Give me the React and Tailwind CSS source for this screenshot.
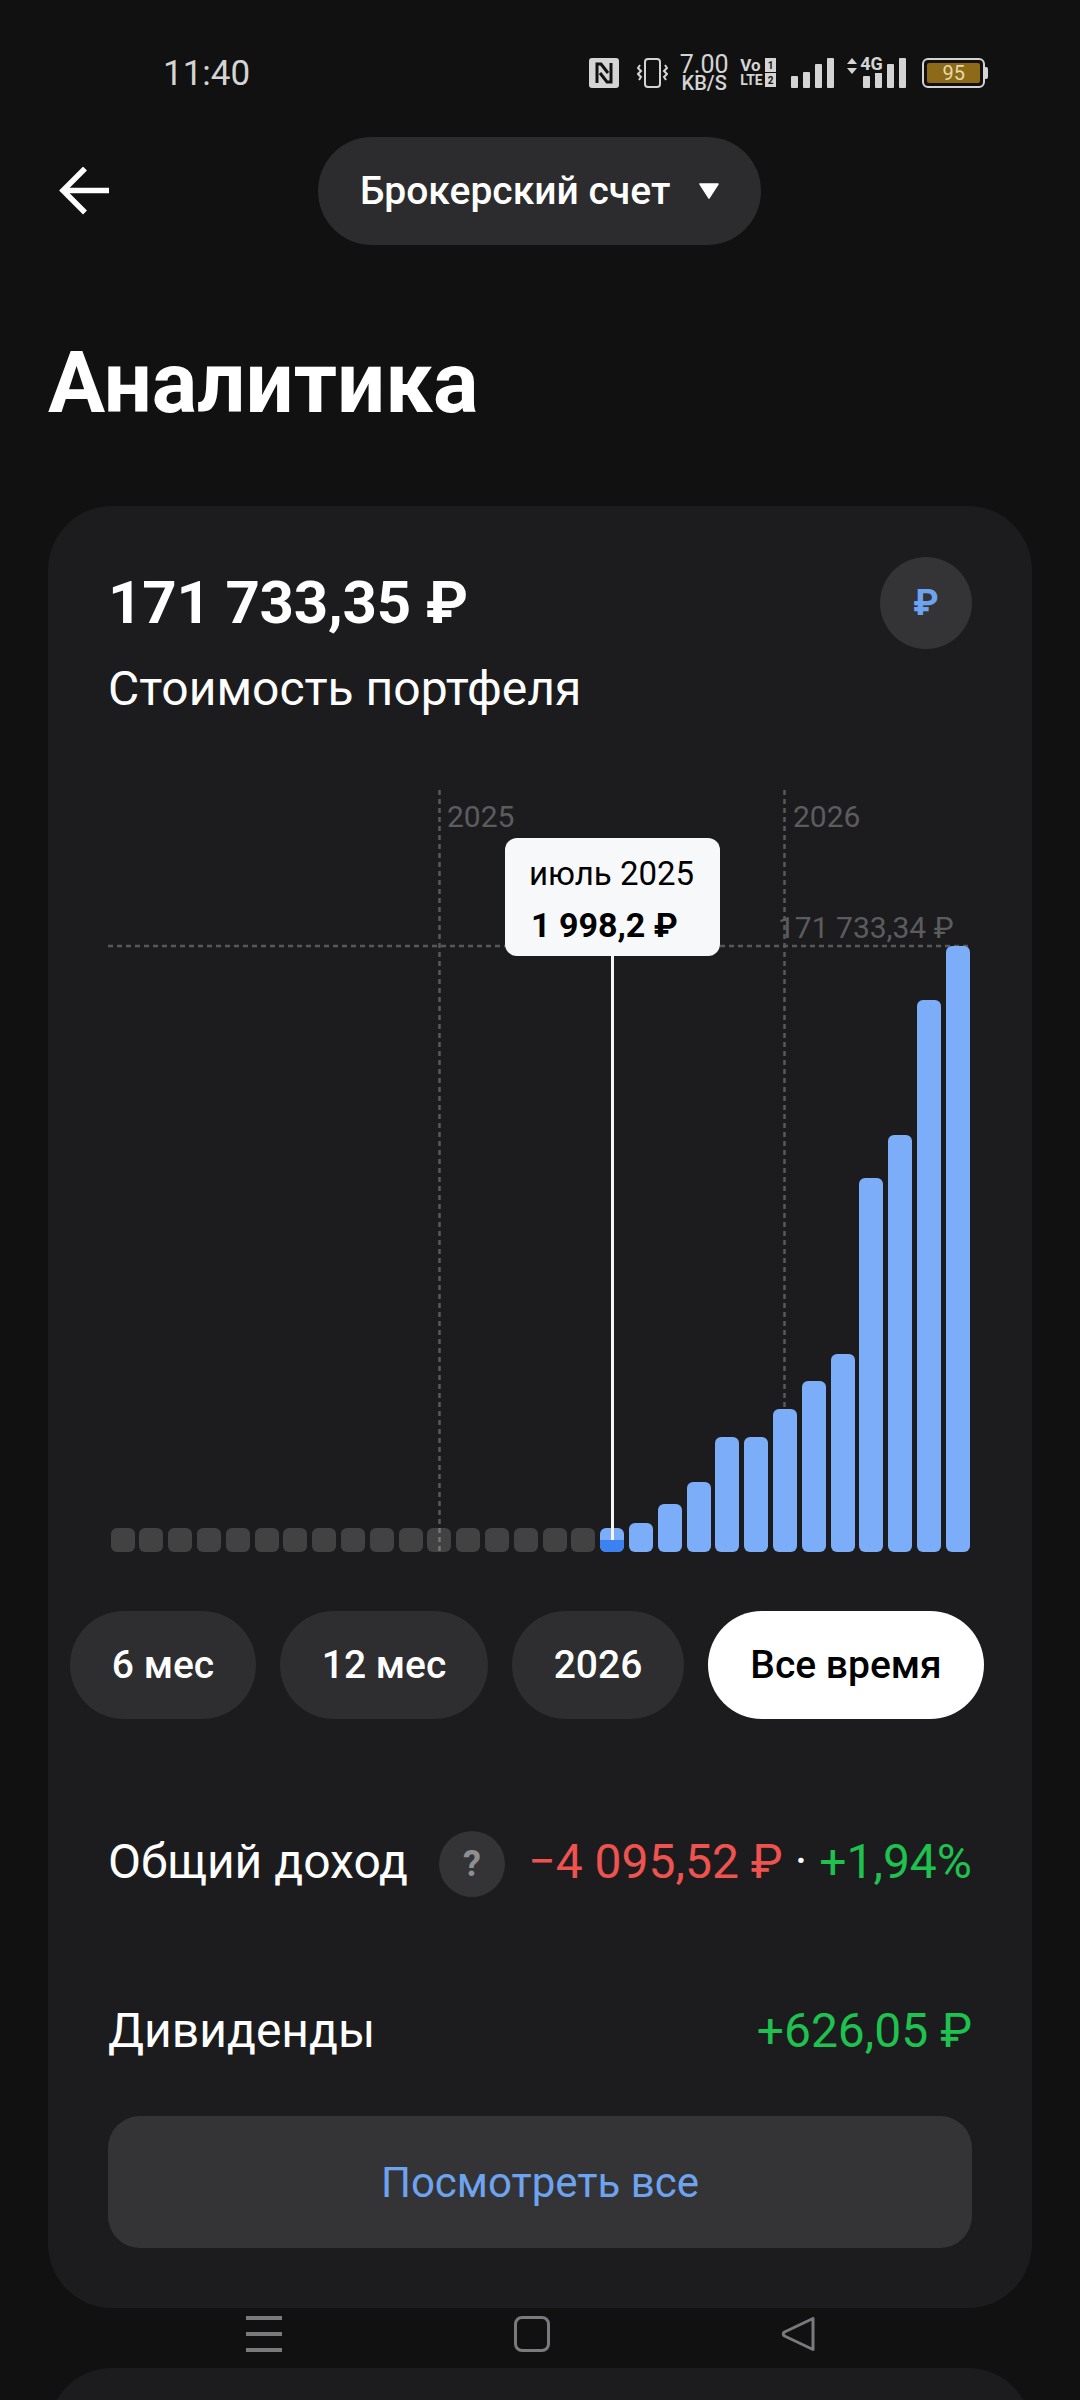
import React from "react";

// bar heights of the chart, left to right (px)
const BAR_HEIGHTS = [
  24, 24, 24, 24, 24, 24, 24, 24, 24, 24, 24, 24, 24, 24, 24, 24, 24, 24,
  29, 48, 70, 115, 115, 143, 171, 198, 374, 417, 552, 606,
];

const PERIODS = [
  { label: "6 мес", width: "w-[186px]" },
  { label: "12 мес", width: "w-[208px]" },
  { label: "2026", width: "w-[172px]" },
  { label: "Все время", width: "w-[276px]", active: true },
];

function SignalBars({ heights }) {
  return (
    <div className="flex items-end gap-[5px]">
      {heights.map((h, i) => (
        <div
          key={i}
          className="w-[7px] rounded-[1px] bg-[#d4d4d4]"
          style={{ height: h }}
        />
      ))}
    </div>
  );
}

function StatusBar() {
  return (
    <div className="flex h-[114px] items-start pt-[54px] text-[#d4d4d4]">
      <span className="ml-[163px] text-[35px] leading-[40px]">11:40</span>
      <div className="ml-[339px] mt-[3px] flex h-[32px] items-center">
        {/* nfc */}
        <svg width="30" height="30" viewBox="0 0 30 30">
          <rect width="30" height="30" rx="3" fill="#d4d4d4" />
          <path d="M8 25V6h4l7 9M22 5v19h-4l-7-9" fill="none" stroke="#111112" strokeWidth="3" />
        </svg>
        {/* vibrate */}
        <svg className="ml-[18px]" width="31" height="30" viewBox="0 0 31 30" fill="none" stroke="#d4d4d4" strokeWidth="2">
          <rect x="8" y="1" width="15" height="28" rx="3" />
          <path d="M3 7l-2 3 3 3-3 3 3 3-2 3M28 7l2 3-3 3 3 3-3 3 2 3" />
        </svg>
        <div className="ml-[12px] flex w-[48px] flex-col items-center">
          <span className="text-[25px] leading-[20px]">7.00</span>
          <span className="text-[20px] leading-[17px] font-medium">KB/S</span>
        </div>
        <div className="ml-[12px] flex w-[36px] flex-col text-[14px] leading-[15px] font-bold">
          <div className="flex justify-between">
            <span className="text-[17px]">Vo</span>
            <span className="flex h-[14px] w-[11px] items-center justify-center bg-[#d4d4d4] text-[10px] text-[#111112]">1</span>
          </div>
          <div className="flex justify-between">
            <span>LTE</span>
            <span className="flex h-[14px] w-[11px] items-center justify-center bg-[#d4d4d4] text-[10px] text-[#111112]">2</span>
          </div>
        </div>
        <div className="ml-[15px]">
          <SignalBars heights={[12, 16, 24, 30]} />
        </div>
        <div className="relative ml-[12px] h-[30px] w-[60px]">
          <div className="absolute right-0 bottom-0">
            <SignalBars heights={[12, 18, 24, 30]} />
          </div>
          <span className="absolute top-[-3px] left-[14px] bg-[#111112] pr-[1px] text-[18px] leading-[18px] font-bold">4G</span>
          <svg className="absolute top-0 left-0" width="12" height="16" viewBox="0 0 12 16" fill="#d4d4d4">
            <path d="M6 0l5 6H1zM6 16l-5-6h10z" />
          </svg>
        </div>
        {/* battery */}
        <div className="ml-[16px] flex items-center">
          <div className="flex h-[30px] w-[63px] items-center rounded-[6px] border-2 border-[#d4d4d4] p-[3px]">
            <div className="flex h-full w-full items-center justify-center rounded-[2px] bg-[#8c6a18] text-[20px] leading-none text-[#e8d9a8]">95</div>
          </div>
          <div className="h-[12px] w-[3px] rounded-r-[2px] bg-[#d4d4d4]" />
        </div>
      </div>
    </div>
  );
}

function Header() {
  return (
    <div className="relative mt-[23px] flex h-[108px] items-center">
      <svg className="ml-[59px] mt-[-1px]" width="50" height="48" viewBox="0 0 50 48" fill="none" stroke="#fff" strokeWidth="5.5">
        <path d="M50 23.5H4" />
        <path d="M26 1.5L4 23.5l22 22" />
      </svg>
      <button className="ml-[209px] flex h-[108px] w-[443px] items-center rounded-full bg-[#2c2c2e] pl-[42px] text-[39px] font-medium whitespace-nowrap text-white">
        Брокерский счет
        <svg className="ml-[28px]" width="22" height="16" viewBox="0 0 22 16" fill="#fff">
          <path d="M2 1h18l-9 14z" stroke="#fff" strokeWidth="1.5" strokeLinejoin="round" />
        </svg>
      </button>
    </div>
  );
}

function Chart() {
  return (
    <div className="relative mt-[73px] h-[762px] w-full">
      {/* grid lines */}
      <svg className="absolute inset-0" width="864" height="762" fill="none" stroke="#58585a" strokeWidth="2.5" strokeDasharray="5 4">
        <path d="M331.5 0V762M676.5 0V762M0 156H862" />
      </svg>

      {/* bars */}
      <div className="absolute right-0 bottom-0 left-0 flex items-end gap-[4.8px] pl-[2.6px]">
        {BAR_HEIGHTS.map((h, i) => (
          <div
            key={i}
            className={`w-[24px] shrink-0 overflow-hidden rounded-[6px] ${
              i < 17 ? "bg-white/[0.17]" : "bg-[#7cadf9]"
            }`}
            style={{ height: h }}
          >
            {i === 17 && <div className="mt-[12px] h-[12px] bg-[#3b82f0]" />}
          </div>
        ))}
      </div>

      <span className="absolute top-[10px] left-[339px] text-[30px] leading-[34px] text-[#5c5c5e]">2025</span>
      <span className="absolute top-[10px] left-[685px] text-[30px] leading-[34px] text-[#5c5c5e]">2026</span>
      <span className="absolute top-[121px] left-[670px] text-[30px] leading-[34px] whitespace-nowrap text-[#5c5c5e]">
        171 733,34 ₽
      </span>

      {/* selected month */}
      <div className="absolute top-[165px] bottom-[12px] left-[503px] w-[3px] bg-[#f5f5f5]" />
      <div className="absolute top-[48px] left-[397px] h-[118px] w-[215px] rounded-[12px] bg-[#f7f8fa] pt-[17px] pl-[24px] text-black">
        <div className="text-[33px] leading-[38px]">июль 2025</div>
        <div className="mt-[13px] ml-[2px] text-[34px] leading-[38px] font-bold whitespace-nowrap">1 998,2 ₽</div>
      </div>
    </div>
  );
}

function SummaryRow({ label, help, children, className }) {
  return (
    <div className={`flex h-[66px] items-center ${className}`}>
      <span className="mb-[4px] text-[48px] leading-[56px] text-white">{label}</span>
      {help && (
        <span className="ml-[31px] flex h-[66px] w-[66px] items-center justify-center rounded-full bg-[#343436] text-[36px] font-bold text-[#8e8e93]">
          ?
        </span>
      )}
      <div className="mb-[4px] ml-auto flex items-center text-[48px] leading-[56px]">{children}</div>
    </div>
  );
}

export default function App() {
  return (
    <div className="relative h-[2400px] w-[1080px] overflow-hidden bg-[#111112] font-['Roboto',sans-serif]">
      <StatusBar />
      <Header />

      <h1 className="mt-[92px] ml-[48px] text-[85px] leading-[92px] font-bold text-white">Аналитика</h1>

      <div className="mx-[48px] mt-[77px] rounded-[64px] bg-[#1c1c1e] px-[60px] pt-[51px] pb-[60px]">
        <div className="flex items-start justify-between">
          <div>
            <div className="mt-[10px] text-[60px] leading-[72px] font-bold tracking-[-0.2px] text-white">171 733,35 ₽</div>
            <div className="mt-[22px] text-[48px] leading-[56px] text-white">Стоимость портфеля</div>
          </div>
          <div className="flex h-[92px] w-[92px] items-center justify-center rounded-full bg-[#343436] text-[36px] font-bold text-[#6ea3f0]">
            ₽
          </div>
        </div>

        <Chart />

        <div className="mx-[-38px] mt-[59px] flex gap-6">
          {PERIODS.map((p) => (
            <button
              key={p.label}
              className={`h-[108px] shrink-0 rounded-full text-[39px] font-medium ${p.width} ${
                p.active ? "bg-white text-black" : "bg-[#2e2e30] text-white"
              }`}
            >
              {p.label}
            </button>
          ))}
        </div>

        <SummaryRow label="Общий доход" help className="mt-[112px]">
          <span className="text-[#ef5350]">−4 095,52 ₽</span>
          <span className="mx-[12px] text-white">·</span>
          <span className="text-[#1fc14f]">+1,94%</span>
        </SummaryRow>

        <SummaryRow label="Дивиденды" className="mt-[103px]">
          <span className="text-[#1fc14f]">+626,05 ₽</span>
        </SummaryRow>

        <button className="mt-[50px] h-[132px] w-full rounded-[32px] bg-[#343436] text-[42px] text-[#6ea3f0]">
          Посмотреть все
        </button>
      </div>

      <div className="mx-[48px] mt-[60px] h-[200px] rounded-[64px] bg-[#1c1c1e]" />

      {/* system navigation */}
      <div className="absolute top-[2316px] left-0 flex h-[36px] w-full items-center">
        <div className="ml-[246px] flex h-[36px] w-[36px] flex-col justify-between">
          <div className="h-[4px] bg-[#7a7a7c]" />
          <div className="h-[4px] bg-[#7a7a7c]" />
          <div className="h-[4px] bg-[#7a7a7c]" />
        </div>
        <div className="ml-[232px] h-[36px] w-[36px] rounded-[8px] border-[3px] border-[#7a7a7c]" />
        <svg className="ml-[230px]" width="36" height="36" viewBox="0 0 36 36" fill="none" stroke="#7a7a7c" strokeWidth="3" strokeLinejoin="round">
          <path d="M33 2.5V33.5L4.5 20Q2 18 4.5 16Z" />
        </svg>
      </div>
    </div>
  );
}
